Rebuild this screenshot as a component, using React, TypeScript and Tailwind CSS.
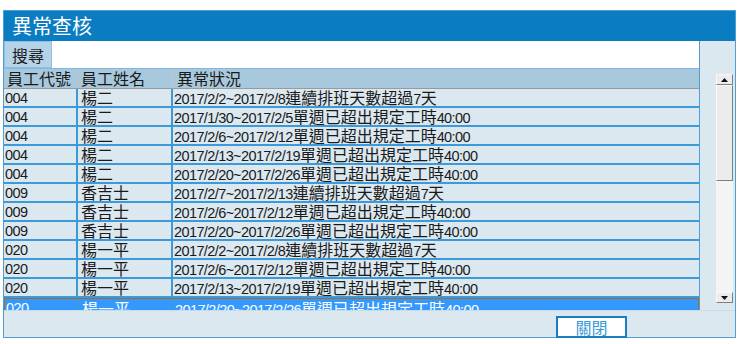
import React from 'react';

interface Row {
  id: string;
  name: string;
  status: string;
}

const ROWS: Row[] = [
  { id: '004', name: '楊二', status: '2017/2/2~2017/2/8連續排班天數超過7天' },
  { id: '004', name: '楊二', status: '2017/1/30~2017/2/5單週已超出規定工時40:00' },
  { id: '004', name: '楊二', status: '2017/2/6~2017/2/12單週已超出規定工時40:00' },
  { id: '004', name: '楊二', status: '2017/2/13~2017/2/19單週已超出規定工時40:00' },
  { id: '004', name: '楊二', status: '2017/2/20~2017/2/26單週已超出規定工時40:00' },
  { id: '009', name: '香吉士', status: '2017/2/7~2017/2/13連續排班天數超過7天' },
  { id: '009', name: '香吉士', status: '2017/2/6~2017/2/12單週已超出規定工時40:00' },
  { id: '009', name: '香吉士', status: '2017/2/20~2017/2/26單週已超出規定工時40:00' },
  { id: '020', name: '楊一平', status: '2017/2/2~2017/2/8連續排班天數超過7天' },
  { id: '020', name: '楊一平', status: '2017/2/6~2017/2/12單週已超出規定工時40:00' },
  { id: '020', name: '楊一平', status: '2017/2/13~2017/2/19單週已超出規定工時40:00' },
  { id: '020', name: '楊一平', status: '2017/2/20~2017/2/26單週已超出規定工時40:00' },
];

// 中英文分段：數字用收窄的 Liberation Sans，中文用 Noto Sans CJK
const Mixed: React.FC<{ text: string }> = ({ text }) => {
  const parts = text.split(/([\u3000-\u9fff\uff00-\uffef]+)/).filter(Boolean);
  return (
    <>
      {parts.map((p, i) =>
        /[\u3000-\u9fff\uff00-\uffef]/.test(p) ? (
          <span key={i} className="text-[16px] font-['Noto_Sans_CJK_TC',sans-serif]">
            {p}
          </span>
        ) : (
          <span key={i} className="text-[14.5px] tracking-[-0.6px] font-['Liberation_Sans',sans-serif]">
            {p}
          </span>
        )
      )}
    </>
  );
};

const Arrow: React.FC<{ up?: boolean }> = ({ up }) => (
  <div className="h-[11px] w-[17px] border border-[#f8f8f8] border-r-[#808080] border-b-[#808080] bg-[#ececec] flex items-center justify-center">
    <svg width="7" height="4" viewBox="0 0 7 4">
      {up ? <path d="M0 4 L3.5 0 L7 4 Z" fill="#111" /> : <path d="M0 0 L3.5 4 L7 0 Z" fill="#111" />}
    </svg>
  </div>
);

export default function App() {
  return (
    <div className="w-[741px] h-[344px] bg-white pt-[10px] pl-[3px] font-['Liberation_Sans','Noto_Sans_CJK_TC',sans-serif] text-[#1a1a1a]">
      <div className="w-[733px] border border-[#4f9fd6] bg-[#dce8f0]">
        {/* 標題列 */}
        <div className="h-[30px] bg-[#0a7cc1] flex items-center pl-[8px]">
          <span className="text-white text-[20px] leading-none font-['Noto_Sans_CJK_TC',sans-serif]">異常查核</span>
        </div>

        <div className="flex h-[269px]">
          <div className="w-[695px] flex flex-col">
            {/* 搜尋列 */}
            <div className="h-[28px] flex border-b border-[#7fb8e0]">
              <div className="w-[48px] bg-[#b6d2e6] border border-[#8cc0e2] flex items-center justify-center">
                <span className="text-[16px] leading-none font-['Noto_Sans_CJK_TC',sans-serif]">搜尋</span>
              </div>
              <div className="flex-1 bg-white" />
            </div>

            {/* 表格 */}
            <div className="flex-1 overflow-hidden">
              <div className="flex h-[20px] bg-[#a8c9dd] border-b border-[#9a9a9a] leading-[19px]">
                <div className="w-[74px] pl-[3px] border-r border-[#c4c4c4]">
                  <span className="text-[16px] font-['Noto_Sans_CJK_TC',sans-serif]">員工代號</span>
                </div>
                <div className="w-[95px] pl-[3px] border-r border-[#c4c4c4]">
                  <span className="text-[16px] font-['Noto_Sans_CJK_TC',sans-serif]">員工姓名</span>
                </div>
                <div className="flex-1 pl-[4px]">
                  <span className="text-[16px] font-['Noto_Sans_CJK_TC',sans-serif]">異常狀況</span>
                </div>
              </div>
              {ROWS.map((r, i) => {
                const sel = i === ROWS.length - 1;
                return (
                  <div
                    key={i}
                    className={
                      sel
                        ? 'flex h-[19px] leading-[18px] bg-[#3399ff] text-white border border-[#a86a2c] border-b-0 whitespace-nowrap'
                        : 'flex h-[19px] leading-[17px] bg-[#dce8f0] border-b-2 border-[#3d9ad8] whitespace-nowrap'
                    }
                  >
                    <div className="w-[74px] pl-[1px] border-r-2 border-[#3d9ad8]">
                      <Mixed text={r.id} />
                    </div>
                    <div className="w-[95px] pl-[3px] border-r-2 border-[#3d9ad8]">
                      <Mixed text={r.name} />
                    </div>
                    <div className="flex-1 pl-[1px]">
                      <Mixed text={r.status} />
                    </div>
                  </div>
                );
              })}
            </div>
          </div>

          {/* 右側捲軸區 */}
          <div className="flex-1 border-l border-[#4f9fd6] pl-[16px] pt-[33px]">
            <div className="w-[17px] h-[229px] bg-[#f4f4f4] flex flex-col">
              <Arrow up />
              <div className="h-[96px] w-[17px] bg-[#ececec] border border-[#f8f8f8] border-r-[#808080] border-b-[#808080]" />
              <div className="flex-1" />
              <Arrow />
            </div>
          </div>
        </div>

        {/* 底部 */}
        <div className="h-[27px] pt-[5px] pl-[552px] border-t border-[#c8dbe8]">
          <div className="w-[71px] h-[22px] bg-white border-2 border-[#1a7fc0] flex items-center justify-center">
            <span className="text-[16px] leading-none text-[#3a9ad9] font-['Noto_Sans_CJK_TC',sans-serif]">關閉</span>
          </div>
        </div>
      </div>
    </div>
  );
}
